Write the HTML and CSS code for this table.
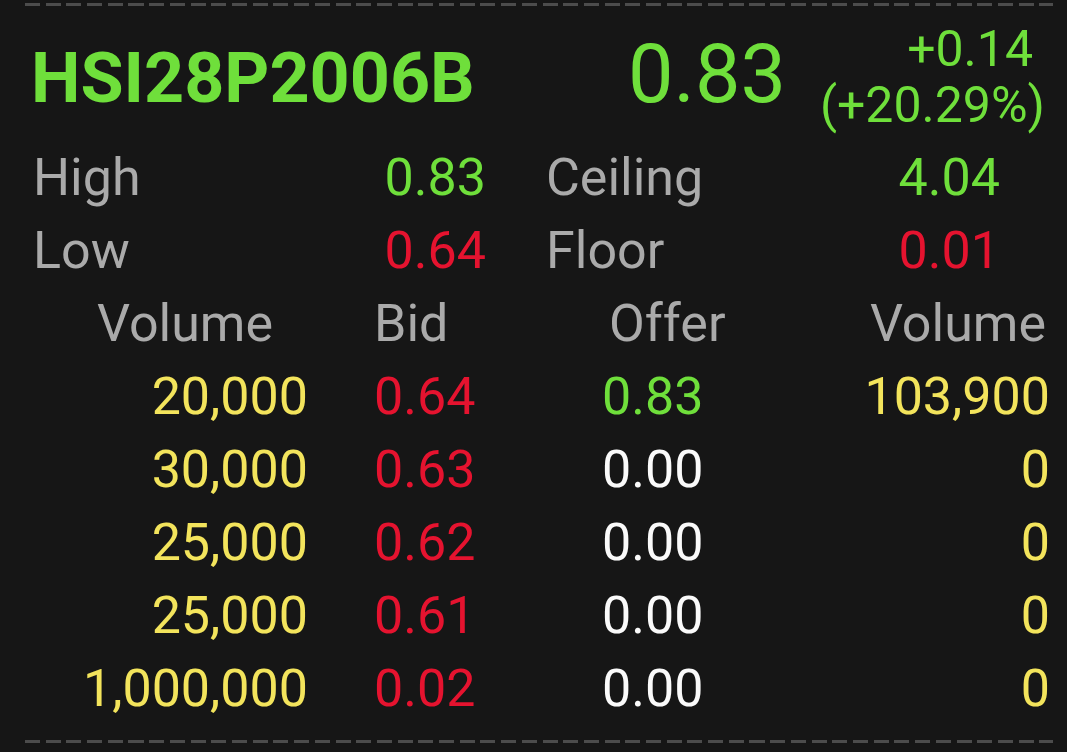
FILE: index.html
```html
<!DOCTYPE html>
<html>
<head>
    <title>HSI28P2006B</title>
    <link rel="stylesheet" href="styles.css">
</head>
<body>
    <div class="dash"></div>

    <!-- 标题与现价 -->
    <div class="quote-head">
        <div class="symbol">HSI28P2006B</div>
        <div class="last">0.83</div>
        <div class="change">
            <div class="chg-abs">+0.14</div>
            <div class="chg-pct">(+20.29%)</div>
        </div>
    </div>

    <!-- 高低价 -->
    <div class="stats">
        <div class="label">High</div>
        <div class="val up">0.83</div>
        <div class="label second">Ceiling</div>
        <div class="val up">4.04</div>
        <div class="label">Low</div>
        <div class="val down">0.64</div>
        <div class="label second">Floor</div>
        <div class="val down">0.01</div>
    </div>

    <!-- 买卖盘 -->
    <div class="book">
        <div class="bh vol-l">Volume</div>
        <div class="bh bid">Bid</div>
        <div class="bh offer">Offer</div>
        <div class="bh vol-r">Volume</div>

        <div class="vol-l qty">20,000</div>
        <div class="bid down">0.64</div>
        <div class="offer up">0.83</div>
        <div class="vol-r qty">103,900</div>

        <div class="vol-l qty">30,000</div>
        <div class="bid down">0.63</div>
        <div class="offer flat">0.00</div>
        <div class="vol-r qty">0</div>

        <div class="vol-l qty">25,000</div>
        <div class="bid down">0.62</div>
        <div class="offer flat">0.00</div>
        <div class="vol-r qty">0</div>

        <div class="vol-l qty">25,000</div>
        <div class="bid down">0.61</div>
        <div class="offer flat">0.00</div>
        <div class="vol-r qty">0</div>

        <div class="vol-l qty">1,000,000</div>
        <div class="bid down">0.02</div>
        <div class="offer flat">0.00</div>
        <div class="vol-r qty">0</div>
    </div>

    <div class="dash bottom"></div>
</body>
</html>
```

FILE: styles.css
```css
body {
    margin: 0;
    height: 100vh;
    background: #161616;
    font-family: Roboto, 'Liberation Sans', sans-serif;
    color: #aaaaaa;
    overflow: hidden;
}

/* 虚线分隔 */
.dash {
    height: 3px;
    margin: 3px 14px 0 25px;
    background: repeating-linear-gradient(90deg, #4c4c4c 0 15px, transparent 15px 20.7px);
}
.dash.bottom { margin-top: 15px; }

.up { color: #6fdf3b; }
.down { color: #e5132f; }
.qty { color: #f3e45c; }
.flat { color: #fafafa; }

/* 头部 */
.quote-head {
    display: flex;
    align-items: flex-start;
    height: 135px;
    padding-left: 31px;
    color: #6fdf3b;
}
.symbol {
    font-size: 70px;
    font-weight: bold;
    line-height: 70px;
    margin-top: 37px;
    width: 597px;
}
.last {
    font-size: 81px;
    line-height: 81px;
    margin-top: 28px;
}
.change {
    margin-left: auto;
    margin-right: 22px;
    margin-top: 15px;
    font-size: 50px;
    line-height: 56px;
    text-align: right;
}
.chg-abs { padding-right: 12px; }

/* 高低价 */
.stats {
    display: grid;
    grid-template-columns: 250px 203px 314px 200px;
    padding-left: 33px;
    font-size: 52px;
    line-height: 73px;
}
.stats .val { text-align: right; }
.stats .second { padding-left: 60px; }

/* 买卖盘 */
.book {
    display: grid;
    grid-template-columns: 370px 230px 250px 217px;
    font-size: 52px;
    line-height: 73px;
}
.vol-l { text-align: right; padding-right: 62px; }
.bh.vol-l { text-align: center; padding-right: 0; }
.bid { padding-left: 4px; }
.offer { padding-left: 2px; }
.bh.offer { padding-left: 9px; }
.vol-r { text-align: right; padding-right: 17px; }
.bh.vol-r { padding-right: 21px; }
```
